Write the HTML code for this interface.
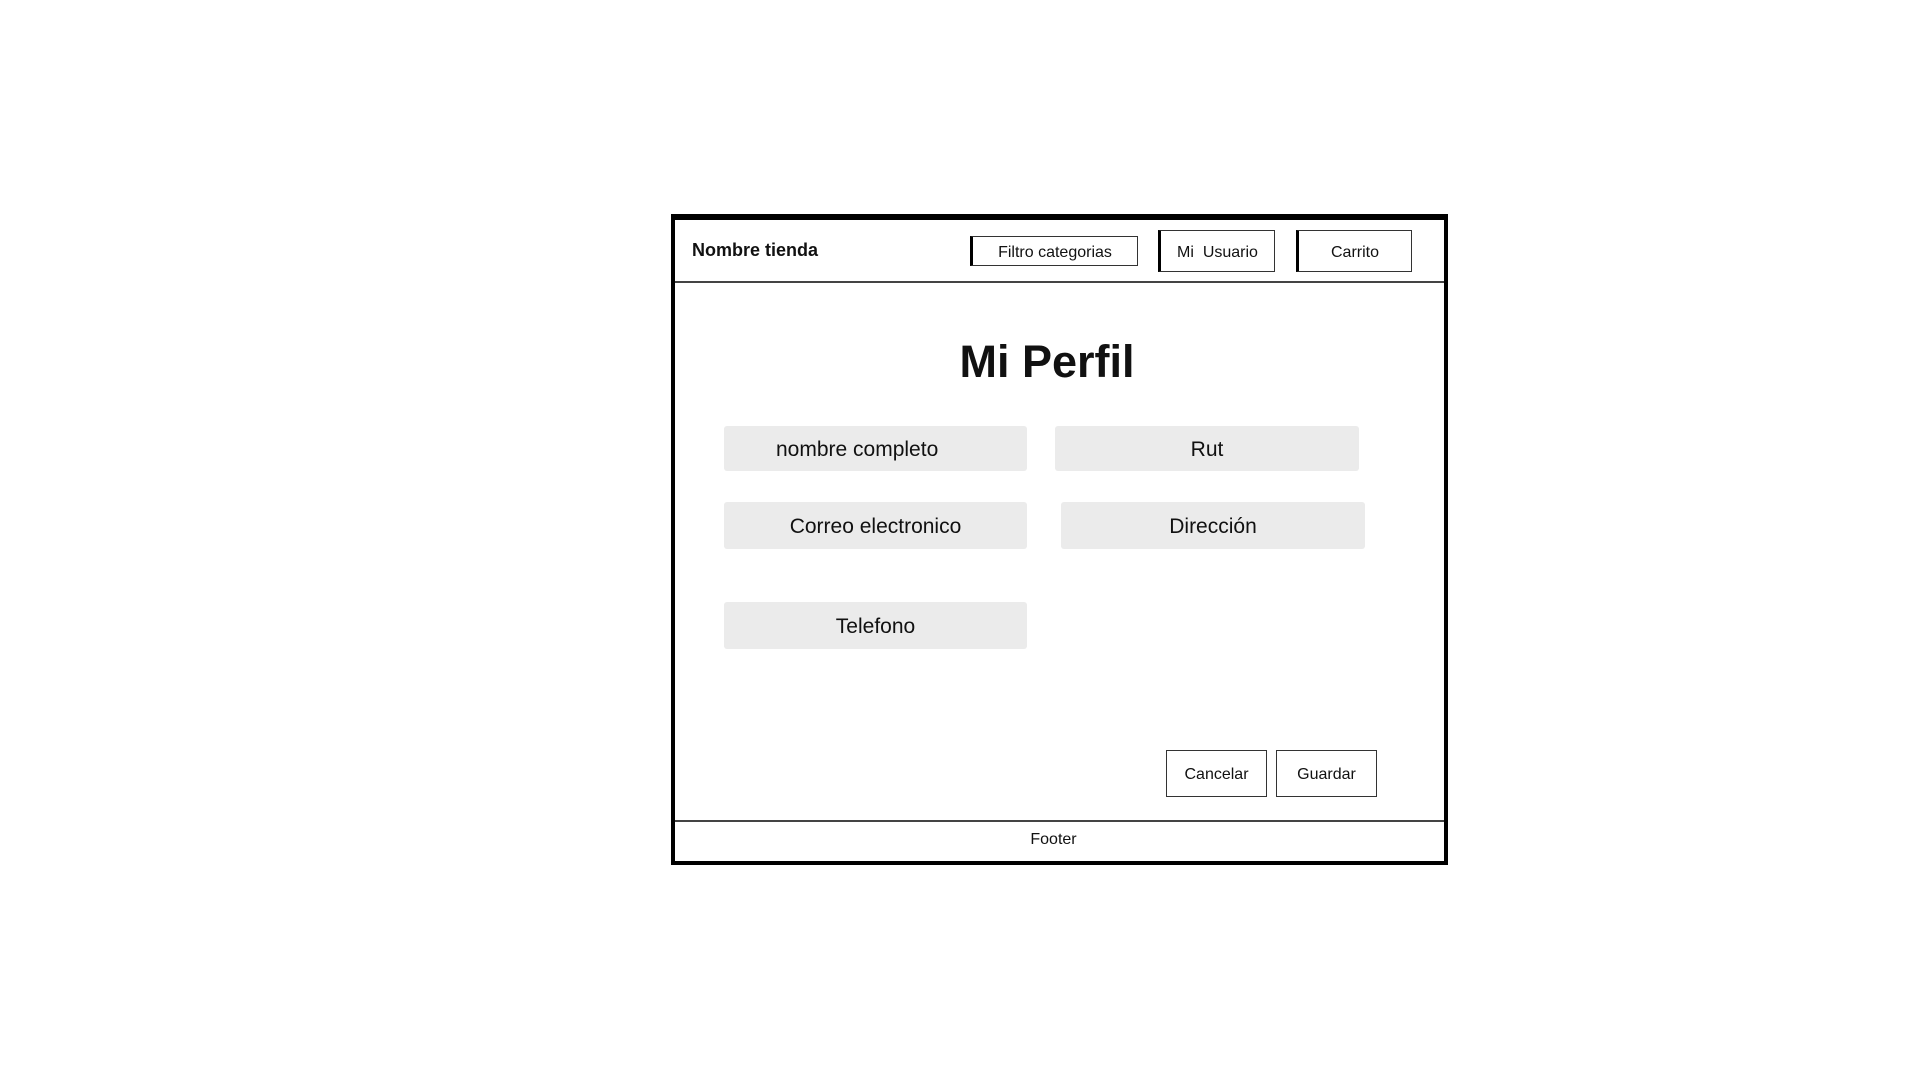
<!DOCTYPE html>
<html><head><meta charset="utf-8"><style>
*{margin:0;padding:0;box-sizing:border-box}
body{width:1920px;height:1080px;background:#fff;position:relative;font-family:"Liberation Sans","DejaVu Sans",sans-serif;color:#111;overflow:hidden}
.a{position:absolute}
.frame{left:671px;top:214px;width:777px;height:651px;border:4px solid #000;border-top-width:6px}
.btn{border:1.5px solid #333;display:flex;align-items:center;justify-content:center;font-size:16px;background:#fff;padding-top:3px}
.f{background:#ebebeb;border-radius:3px;display:flex;align-items:center;justify-content:center;font-size:21px;padding-top:2px}
</style></head><body>
<div class="a frame"></div>
<div class="a" style="left:675px;top:281px;width:769px;height:2px;background:#444"></div>
<div class="a" style="left:692px;top:240px;font-size:18px;font-weight:bold">Nombre tienda</div>
<div class="a btn" style="left:970px;top:236px;width:168px;height:30px;border-left:3px solid #000">Filtro categorias</div>
<div class="a btn" style="left:1158px;top:230px;width:117px;height:42px;border-left:3px solid #000">Mi&nbsp; Usuario</div>
<div class="a btn" style="left:1296px;top:230px;width:116px;height:42px;border-left:3px solid #000">Carrito</div>
<div class="a" style="left:872px;top:336px;width:350px;text-align:center;font-size:45px;font-weight:bold">Mi Perfil</div>
<div class="a f" style="left:724px;top:426px;width:303px;height:45px;justify-content:flex-start;padding-left:52px">nombre completo</div>
<div class="a f" style="left:1055px;top:426px;width:304px;height:45px">Rut</div>
<div class="a f" style="left:724px;top:502px;width:303px;height:47px">Correo electronico</div>
<div class="a f" style="left:1061px;top:502px;width:304px;height:47px">Dirección</div>
<div class="a f" style="left:724px;top:602px;width:303px;height:47px">Telefono</div>
<div class="a btn" style="left:1166px;top:750px;width:101px;height:47px">Cancelar</div>
<div class="a btn" style="left:1276px;top:750px;width:101px;height:47px">Guardar</div>
<div class="a" style="left:675px;top:820px;width:769px;height:1.5px;background:#444"></div>
<div class="a" style="left:669px;top:831px;width:769px;text-align:center;font-size:16px">Footer</div>
</body></html>
